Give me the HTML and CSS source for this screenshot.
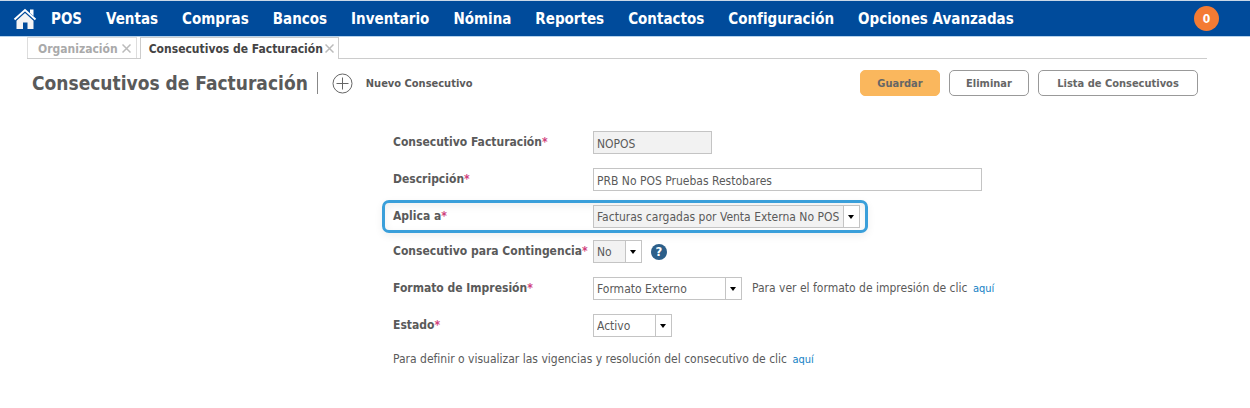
FILE: index.html
```html
<!DOCTYPE html>
<html lang="es">
<head>
<meta charset="utf-8">
<meta name="viewport" content="width=device-width, initial-scale=1">
<title>Consecutivos de Facturación</title>
<link rel="stylesheet" href="styles.css">
</head>
<body>
<header class="topbar">
  <a class="home" href="#" aria-label="Inicio">
    <svg width="24" height="22" viewBox="0 0 24 22">
      <path fill="none" stroke="#fff" stroke-width="2" d="M1.500 11.500 12 2l10.500 9.500"/>
      <path fill="#fff" d="M17 1.500h3.500V8L17 5z"/>
      <path fill="#f4f4f4" d="M12 5 3.500 12.700V21H10v-6.500h4.500V21h6v-8.300z"/>
    </svg>
  </a>
  <nav class="menu">
    <a href="#">POS</a>
    <a href="#">Ventas</a>
    <a href="#">Compras</a>
    <a href="#">Bancos</a>
    <a href="#">Inventario</a>
    <a href="#">Nómina</a>
    <a href="#">Reportes</a>
    <a href="#">Contactos</a>
    <a href="#">Configuración</a>
    <a href="#">Opciones Avanzadas</a>
  </nav>
  <button class="counter" type="button">0</button>
</header>
<div class="tabs">
  <div class="tab">
    <a href="#">Organización</a>
    <button class="close" type="button" aria-label="Cerrar Organización"><svg width="9" height="9" viewBox="0 0 9 9"><path d="M.5.5l8 8M8.500.5l-8 8"/></svg></button>
  </div>
  <div class="tab tab-active">
    <a href="#">Consecutivos de Facturación</a>
    <button class="close" type="button" aria-label="Cerrar Consecutivos de Facturación"><svg width="9" height="9" viewBox="0 0 9 9"><path d="M.5.5l8 8M8.500.5l-8 8"/></svg></button>
  </div>
</div>
<main>
  <div class="heading">
    <h1>Consecutivos de Facturación</h1>
    <button class="new" type="button">
      <svg width="21" height="21" viewBox="0 0 21 21"><circle cx="10.500" cy="10.500" r="9.500"/><path d="M10.500 4.500v12M4.500 10.500h12"/></svg>
      <span>Nuevo Consecutivo</span>
    </button>
    <div class="actions">
      <button class="btn btn-primary" type="button">Guardar</button>
      <button class="btn" type="button">Eliminar</button>
      <button class="btn btn-wide" type="button">Lista de Consecutivos</button>
    </div>
  </div>
  <form class="form">
    <div class="row">
      <label for="code">Consecutivo Facturación<b>*</b></label>
      <input class="field field-code" id="code" type="text" value="NOPOS" readonly>
    </div>
    <div class="row">
      <label for="description">Descripción<b>*</b></label>
      <input class="field field-description" id="description" type="text" value="PRB No POS Pruebas Restobares">
    </div>
    <div class="row row-marked">
      <label for="applies">Aplica a<b>*</b></label>
      <span class="combo combo-applies locked"><select id="applies"><option>Facturas cargadas por Venta Externa No POS</option></select></span>
    </div>
    <div class="row">
      <label for="contingency">Consecutivo para Contingencia<b>*</b></label>
      <span class="combo combo-short locked"><select id="contingency"><option>No</option></select></span>
      <button class="help" type="button" aria-label="Ayuda">?</button>
    </div>
    <div class="row">
      <label for="format">Formato de Impresión<b>*</b></label>
      <span class="combo combo-format"><select id="format"><option>Formato Externo</option></select></span>
      <p class="note">Para ver el formato de impresión de clic <a href="#">aquí</a></p>
    </div>
    <div class="row">
      <label for="status">Estado<b>*</b></label>
      <span class="combo combo-status"><select id="status"><option>Activo</option></select></span>
    </div>
    <p class="note">Para definir o visualizar las vigencias y resolución del consecutivo de clic <a href="#">aquí</a></p>
  </form>
</main>
</body>
</html>
```
FILE: styles.css
```css
*, *::before, *::after { box-sizing: border-box; }
body {
  margin: 0;
  background: #fff;
  color: #5a5a5a;
  font: 12px "DejaVu Sans Condensed", "DejaVu Sans", sans-serif;
}
button, input, select { font: inherit; color: inherit; }
button { padding: 0; border: 0; background: none; cursor: pointer; }
a { text-decoration: none; color: inherit; }
p, h1 { margin: 0; }

.topbar {
  display: flex;
  align-items: center;
  height: 37px;
  padding: 0 31px 0 13px;
  border-top: 1px solid #c9d8e8;
  border-bottom: 1px solid #b5d2ec;
  background: #004b9b;
}
.home { display: flex; margin-right: 14px; }
.menu {
  display: flex;
  gap: 24px;
  color: #fff;
  font-size: 15px;
  font-weight: bold;
  white-space: nowrap;
}
.counter {
  width: 25px;
  height: 25px;
  margin-left: auto;
  border-radius: 50%;
  background: #f47b33;
  color: #fff;
  font-weight: bold;
}

.tabs {
  display: flex;
  gap: 3px;
  height: 22px;
  margin: 0 43px 0 27px;
  border-bottom: 1px solid #ccc;
  font-weight: bold;
  white-space: nowrap;
}
.tab {
  display: flex;
  align-items: center;
  gap: 4px;
  height: 21px;
  padding: 1px 5px 0 10px;
  border: 1px solid #ddd;
  border-bottom: 0;
  color: #aaa;
}
.tab-active {
  gap: 2px;
  height: 22px;
  padding: 0 4px 0 8px;
  border-color: #ccc;
  background: #fff;
  color: #444;
}
.close { display: flex; }
.close svg { stroke: #bbb; stroke-width: 1.5; fill: none; }

.heading {
  display: flex;
  align-items: center;
  height: 48px;
  padding: 0 52px 0 32px;
  white-space: nowrap;
}
.heading h1 {
  padding-right: 9px;
  border-right: 1px solid #888;
  font-size: 19px;
  line-height: 22px;
}
.new {
  display: flex;
  align-items: center;
  gap: 13px;
  margin-left: 14px;
  font-size: 11px;
  font-weight: bold;
}
.new svg { fill: none; stroke: #666; stroke-width: 1; }
.actions { display: flex; gap: 9px; margin-left: auto; }
.btn {
  width: 80px;
  height: 26px;
  border: 1px solid #999;
  border-radius: 5px;
  background: #fff;
  color: #666;
  font-size: 11px;
  font-weight: bold;
}
.btn-primary { border-color: #fab75d; background: #fab75d; }
.btn-wide { width: 160px; }

.form { padding: 24px 0 24px 393px; white-space: nowrap; }
.row {
  position: relative;
  display: flex;
  align-items: center;
  height: 23px;
  margin-bottom: 14px;
}
.row label { width: 200px; margin-bottom: 2px; font-weight: bold; }
.row label b { color: #d0427c; }
.row-marked { margin-bottom: 12px; }
.row-marked::before {
  content: "";
  position: absolute;
  inset: -5px auto -5px -11px;
  width: 486px;
  border: 3px solid #3a9fda;
  border-radius: 7px;
  box-shadow: 0 3px 8px #0001, inset 0 3px 8px #0001;
  pointer-events: none;
}
.field, .combo {
  height: 23px;
  border: 1px solid #c4c4c4;
  background: #fff;
}
.field { padding: 2px 3px 0; outline: 0; }
.field-code { width: 119px; background: #f2f2f2; }
.field-description { width: 389px; }
.combo { position: relative; display: flex; }
.combo select {
  flex: 1;
  min-width: 0;
  margin-right: 15px;
  padding: 1px 3px 0;
  border: 0;
  border-right: 1px solid #c4c4c4;
  border-radius: 0;
  outline: 0;
  background: none;
  appearance: none;
}
.combo::after {
  content: "";
  position: absolute;
  top: 9px;
  right: 5px;
  border: 3px solid transparent;
  border-top: 4px solid #000;
  border-bottom: 0;
  pointer-events: none;
}
.combo.locked select { background: #f2f2f2; }
.combo-applies { width: 267px; }
.combo-short { width: 49px; }
.combo-format { width: 149px; }
.combo-status { width: 79px; }
.help {
  width: 16px;
  height: 16px;
  margin-left: 9px;
  border-radius: 50%;
  background: #2c5f8a;
  color: #fff;
  font-size: 13px;
  font-weight: bold;
  line-height: 16px;
}
.note { line-height: 16px; }
.note a { margin-left: 2px; color: #1482c5; font-size: 11px; }
.row .note { margin-left: 10px; }
```
